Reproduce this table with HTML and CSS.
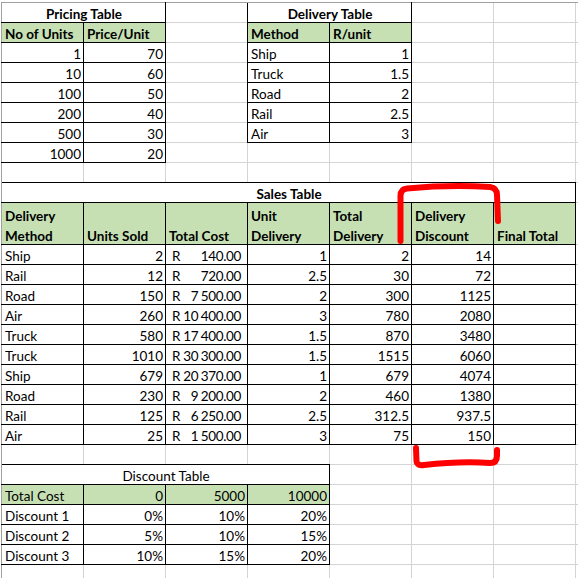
FILE: index.html
```html
<!DOCTYPE html>
<html>
<head>
<meta charset="utf-8">
<link rel="stylesheet" href="styles.css">
</head>
<body>
<table class="sheet">
  <colgroup><col><col><col><col><col><col><col><col class="edge"></colgroup>
  <tr>
    <td class="b bold c" colspan="2">Pricing Table</td><td></td>
    <td class="b bold c" colspan="2">Delivery Table</td><td></td><td></td><td></td>
  </tr>
  <tr>
    <td class="b g bold">No of Units</td><td class="b g bold">Price/Unit</td><td></td>
    <td class="b g bold">Method</td><td class="b g bold">R/unit</td><td></td><td></td><td></td>
  </tr>
  <tr><td class="b r">1</td><td class="b r">70</td><td></td><td class="b">Ship</td><td class="b r">1</td><td></td><td></td><td></td></tr>
  <tr><td class="b r">10</td><td class="b r">60</td><td></td><td class="b">Truck</td><td class="b r">1.5</td><td></td><td></td><td></td></tr>
  <tr><td class="b r">100</td><td class="b r">50</td><td></td><td class="b">Road</td><td class="b r">2</td><td></td><td></td><td></td></tr>
  <tr><td class="b r">200</td><td class="b r">40</td><td></td><td class="b">Rail</td><td class="b r">2.5</td><td></td><td></td><td></td></tr>
  <tr><td class="b r">500</td><td class="b r">30</td><td></td><td class="b">Air</td><td class="b r">3</td><td></td><td></td><td></td></tr>
  <tr><td class="b r">1000</td><td class="b r">20</td><td></td><td></td><td></td><td></td><td></td><td></td></tr>
  <tr><td></td><td></td><td></td><td></td><td></td><td></td><td></td><td></td></tr>
  <tr><td class="b bold c" colspan="7">Sales Table</td><td></td></tr>
  <tr class="tall">
    <td class="b g bold"><span class="l1">Delivery</span>Method</td>
    <td class="b g bold">Units Sold</td>
    <td class="b g bold">Total Cost</td>
    <td class="b g bold"><span class="l1">Unit</span>Delivery</td>
    <td class="b g bold"><span class="l1">Total</span>Delivery</td>
    <td class="b g bold"><span class="l1">Delivery</span>Discount</td>
    <td class="b g bold">Final Total</td>
    <td></td>
  </tr>
  <tr><td class="b">Ship</td><td class="b r">2</td><td class="b acc"><div class="acc-in"><span>R</span><span class="amt">140.00</span></div></td><td class="b r">1</td><td class="b r">2</td><td class="b r">14</td><td class="b"></td><td></td></tr>
  <tr><td class="b">Rail</td><td class="b r">12</td><td class="b acc"><div class="acc-in"><span>R</span><span class="amt">720.00</span></div></td><td class="b r">2.5</td><td class="b r">30</td><td class="b r">72</td><td class="b"></td><td></td></tr>
  <tr><td class="b">Road</td><td class="b r">150</td><td class="b acc"><div class="acc-in"><span>R</span><span class="amt">7 500.00</span></div></td><td class="b r">2</td><td class="b r">300</td><td class="b r">1125</td><td class="b"></td><td></td></tr>
  <tr><td class="b">Air</td><td class="b r">260</td><td class="b acc"><div class="acc-in"><span>R</span><span class="amt">10 400.00</span></div></td><td class="b r">3</td><td class="b r">780</td><td class="b r">2080</td><td class="b"></td><td></td></tr>
  <tr><td class="b">Truck</td><td class="b r">580</td><td class="b acc"><div class="acc-in"><span>R</span><span class="amt">17 400.00</span></div></td><td class="b r">1.5</td><td class="b r">870</td><td class="b r">3480</td><td class="b"></td><td></td></tr>
  <tr><td class="b">Truck</td><td class="b r">1010</td><td class="b acc"><div class="acc-in"><span>R</span><span class="amt">30 300.00</span></div></td><td class="b r">1.5</td><td class="b r">1515</td><td class="b r">6060</td><td class="b"></td><td></td></tr>
  <tr><td class="b">Ship</td><td class="b r">679</td><td class="b acc"><div class="acc-in"><span>R</span><span class="amt">20 370.00</span></div></td><td class="b r">1</td><td class="b r">679</td><td class="b r">4074</td><td class="b"></td><td></td></tr>
  <tr><td class="b">Road</td><td class="b r">230</td><td class="b acc"><div class="acc-in"><span>R</span><span class="amt">9 200.00</span></div></td><td class="b r">2</td><td class="b r">460</td><td class="b r">1380</td><td class="b"></td><td></td></tr>
  <tr><td class="b">Rail</td><td class="b r">125</td><td class="b acc"><div class="acc-in"><span>R</span><span class="amt">6 250.00</span></div></td><td class="b r">2.5</td><td class="b r">312.5</td><td class="b r">937.5</td><td class="b"></td><td></td></tr>
  <tr><td class="b">Air</td><td class="b r">25</td><td class="b acc"><div class="acc-in"><span>R</span><span class="amt">1 500.00</span></div></td><td class="b r">3</td><td class="b r">75</td><td class="b r">150</td><td class="b"></td><td></td></tr>
  <tr><td></td><td></td><td></td><td></td><td></td><td></td><td></td><td></td></tr>
  <tr><td class="b c" colspan="4">Discount Table</td><td></td><td></td><td></td><td></td></tr>
  <tr><td class="b g">Total Cost</td><td class="b g r">0</td><td class="b g r">5000</td><td class="b g r">10000</td><td></td><td></td><td></td><td></td></tr>
  <tr><td class="b">Discount 1</td><td class="b r">0%</td><td class="b r">10%</td><td class="b r">20%</td><td></td><td></td><td></td><td></td></tr>
  <tr><td class="b">Discount 2</td><td class="b r">5%</td><td class="b r">10%</td><td class="b r">15%</td><td></td><td></td><td></td><td></td></tr>
  <tr><td class="b">Discount 3</td><td class="b r">10%</td><td class="b r">15%</td><td class="b r">20%</td><td></td><td></td><td></td><td></td></tr>
  <tr><td></td><td></td><td></td><td></td><td></td><td></td><td></td><td></td></tr>
</table>
<svg class="marks" width="578" height="578" viewBox="0 0 578 578">
  <path d="M400.5 241 L400.5 196 Q400.5 189 407 188.5 Q450 184.5 490 187 Q497 188 497 195 L498 221"/>
  <path d="M416 448 L416.5 461 Q417 466 424 465 Q460 461 490 463 Q497 463 497 456 L497 450"/>
</svg>
</body>
</html>
```

FILE: styles.css
```css
html, body {
  margin: 0;
  padding: 0;
  overflow: hidden;
  background: #fff;
}
body {
  width: 578px;
  height: 578px;
  position: relative;
  font-family: Lato, "Open Sans", sans-serif;
  font-size: 13.5px;
  color: #000;
}
.sheet {
  border-collapse: collapse;
  table-layout: fixed;
  width: 577px;
  margin: 2px 0 0 1px;
}
.sheet col {
  width: 82px;
  border-left: 1px solid #d4d4d4;
  border-right: 1px solid #d4d4d4;
}
.sheet col.edge {
  width: auto;
  border-right: none;
}
.sheet tr {
  height: 20px;
  border-top: 1px solid #d4d4d4;
  border-bottom: 1px solid #d4d4d4;
}
.sheet tr.tall {
  height: 42px;
}
.sheet td {
  padding: 0 2px 0 3px;
  vertical-align: bottom;
  line-height: 16px;
  white-space: nowrap;
  overflow: hidden;
}
.l1 {
  display: block;
  margin-bottom: 4px;
}
.b {
  border: 1px solid #000;
}
.g {
  background: #c6e0b4;
}
.bold {
  font-weight: 700;
}
.r {
  text-align: right;
}
.c {
  text-align: center;
}
.sheet tr:first-child td {
  border-top: 1px solid #a0a0a0;
}
.sheet tr td:first-child {
  border-left: 1px solid #a0a0a0;
}
.sheet td.acc {
  padding: 0;
}
.acc-in {
  display: flex;
  justify-content: space-between;
  padding: 0 6px 0 6px;
}
.amt {
  letter-spacing: -0.35px;
  word-spacing: -0.5px;
}
.marks {
  position: absolute;
  left: 0;
  top: 0;
  pointer-events: none;
}
.marks path {
  fill: none;
  stroke: #ff0000;
  stroke-width: 6;
  stroke-linecap: round;
  stroke-linejoin: round;
}
```
